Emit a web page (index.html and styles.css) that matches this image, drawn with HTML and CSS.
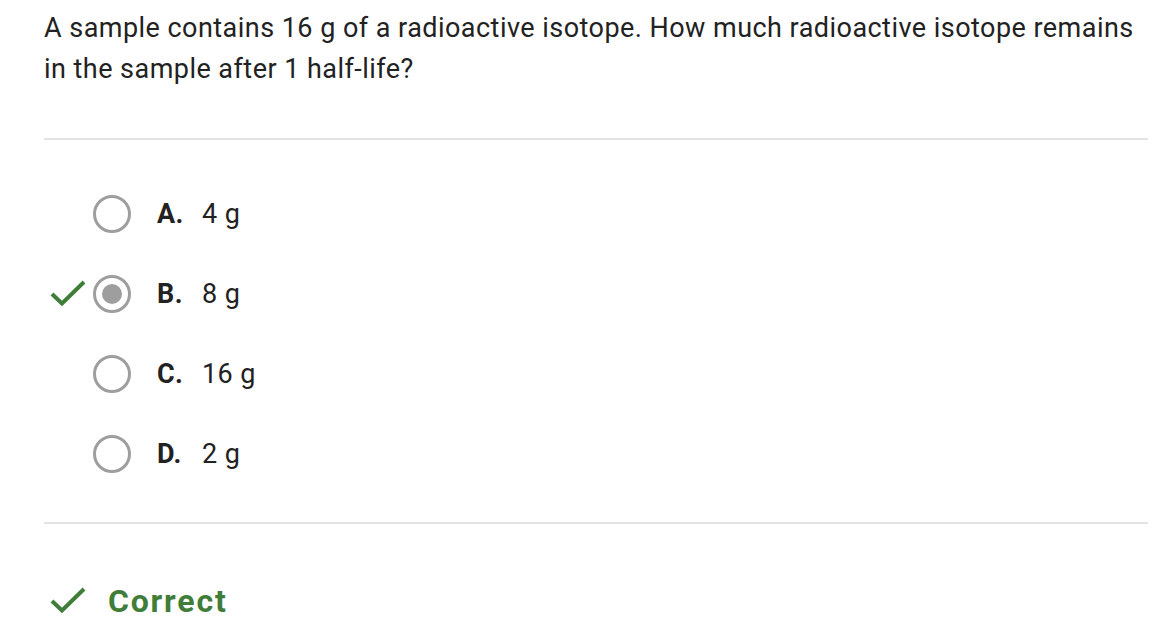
FILE: index.html
```html
<!DOCTYPE html>
<html>
<head>
<meta charset="utf-8">
<link rel="stylesheet" href="styles.css">
</head>
<body>
<div class="page">
  <p class="question">A sample contains 16 g of a radioactive isotope. How much radioactive isotope remains in the sample after 1 half-life?</p>
  <hr class="divider">
  <div class="options">
    <div class="option">
      <span class="mark"></span>
      <span class="radio"></span>
      <span class="letter">A.</span>
      <span class="value">4 g</span>
    </div>
    <div class="option">
      <span class="mark"><svg width="36" height="28" viewBox="0 0 36 28"><polyline points="2,14 12,23.5 34,2" fill="none" stroke="#3f7d39" stroke-width="4"/></svg></span>
      <span class="radio checked"><span class="dot"></span></span>
      <span class="letter">B.</span>
      <span class="value">8 g</span>
    </div>
    <div class="option">
      <span class="mark"></span>
      <span class="radio"></span>
      <span class="letter">C.</span>
      <span class="value">16 g</span>
    </div>
    <div class="option">
      <span class="mark"></span>
      <span class="radio"></span>
      <span class="letter">D.</span>
      <span class="value">2 g</span>
    </div>
  </div>
  <hr class="divider">
  <div class="result">
    <span class="mark"><svg width="36" height="28" viewBox="0 0 36 28"><polyline points="2,14 12,23.5 34,2" fill="none" stroke="#3f7d39" stroke-width="4"/></svg></span>
    <span class="result-text">Correct</span>
  </div>
</div>
</body>
</html>
```
FILE: styles.css
```css
html, body {
  margin: 0;
  padding: 0;
  background: #ffffff;
}
.page {
  padding: 8px 23px 0 44px;
  font-family: Roboto, "Liberation Sans", sans-serif;
  color: #222222;
}
.question {
  margin: 0;
  font-size: 27px;
  letter-spacing: 0.46px;
  line-height: 41px;
  padding-right: 6px;
}
.divider {
  border: none;
  height: 2px;
  background: #e3e3e3;
  margin: 0;
}
.question + .divider {
  margin-top: 48px;
}
.options {
  padding: 34px 0 28px 0;
}
.option {
  display: flex;
  align-items: center;
  height: 80px;
  padding-left: 6px;
}
.mark {
  width: 36px;
  height: 28px;
  display: flex;
  margin-right: 7px;
}
.radio {
  width: 38px;
  height: 38px;
  box-sizing: border-box;
  border: 3px solid #9e9e9e;
  border-radius: 50%;
  display: flex;
  align-items: center;
  justify-content: center;
  margin-right: 26px;
}
.dot {
  width: 20px;
  height: 20px;
  border-radius: 50%;
  background: #9e9e9e;
}
.letter {
  font-weight: 700;
  font-size: 27px;
  letter-spacing: 0.4px;
  width: 45px;
}
.value {
  font-size: 27px;
  letter-spacing: 0.4px;
}
.result {
  display: flex;
  align-items: center;
  height: 60px;
  margin-top: 47px;
  padding-left: 6px;
}
.result .mark {
  margin-right: 22px;
}
.result-text {
  color: #3f7d39;
  font-weight: 700;
  font-size: 32px;
  letter-spacing: 1.8px;
}
```
